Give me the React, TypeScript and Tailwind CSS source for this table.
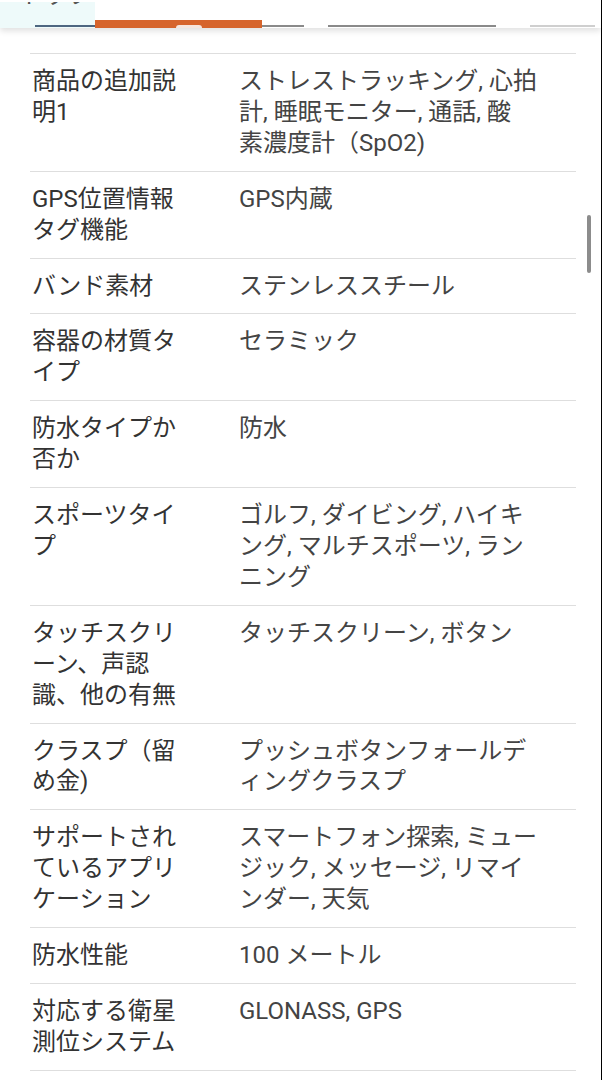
import React from "react";

const rows: [string, string[]][] = [
  ["商品の追加説明1", ["ストレストラッキング, 心拍", "計, 睡眠モニター, 通話, 酸", "素濃度計（SpO2)"]],
  ["GPS位置情報タグ機能", ["GPS内蔵"]],
  ["バンド素材", ["ステンレススチール"]],
  ["容器の材質タイプ", ["セラミック"]],
  ["防水タイプか否か", ["防水"]],
  ["スポーツタイプ", ["ゴルフ, ダイビング, ハイキ", "ング, マルチスポーツ, ラン", "ニング"]],
  ["タッチスクリーン、声認識、他の有無", ["タッチスクリーン, ボタン"]],
  ["クラスプ（留め金)", ["プッシュボタンフォールデ", "ィングクラスプ"]],
  ["サポートされているアプリケーション", ["スマートフォン探索, ミュー", "ジック, メッセージ, リマイ", "ンダー, 天気"]],
  ["防水性能", ["100 メートル"]],
  ["対応する衛星測位システム", ["GLONASS, GPS"]],
];

export default function App() {
  return (
    <div
      className="relative h-[1080px] overflow-hidden bg-white text-[#3d3d3d] border-r border-black"
      style={{ fontFamily: 'Roboto, "Noto Sans CJK JP", sans-serif' }}
    >
      {/* tab header, scrolled mostly out of view */}
      <div className="flex h-[28px] items-end overflow-hidden bg-white shadow-[0_3px_6px_rgba(0,0,0,0.12)]">
        <div className="flex h-[26px] w-[95px] flex-col justify-between overflow-hidden bg-[#eefafa]">
          <span className="-mt-[19px] pl-[20px] text-[24px] leading-[24px] text-[#555]">トップ</span>
          <div className="mb-[1px] ml-[35px] h-[2px] bg-[#4d6680]" />
        </div>
        <div className="flex h-[8px] w-[167px] items-end justify-center bg-[#d6642c]">
          <div className="ml-[20px] h-[3px] w-[26px] rounded-t-full bg-[#f6e6de]" />
        </div>
        <div className="mb-[1px] h-[2px] w-[42px] bg-[#8a8a8a]" />
        <div className="mb-[1px] ml-[24px] h-[2px] w-[168px] bg-[#8a8a8a]" />
        <div className="mb-[1px] ml-[34px] h-[2px] w-[65px] bg-[#cfcfcf]" />
      </div>

      <div className="ml-[30px] mr-[25px] mt-[25px] border-t border-[#dedede]">
        {rows.map(([label, lines]) => (
          <div key={label} className="flex border-b border-[#dedede] py-[12px] text-[24px] leading-[30.9px]">
            <div className="w-[160px] shrink-0 break-all pl-[2px] text-[#333]">{label}</div>
            <div className="ml-[49px] flex flex-col whitespace-nowrap text-[#444]">
              {lines.map((l) => (
                <span key={l}>{l}</span>
              ))}
            </div>
          </div>
        ))}
      </div>

      <div className="absolute left-[587px] top-[215px] h-[58px] w-[4px] rounded-full bg-[#8c8c8c]" />
    </div>
  );
}
